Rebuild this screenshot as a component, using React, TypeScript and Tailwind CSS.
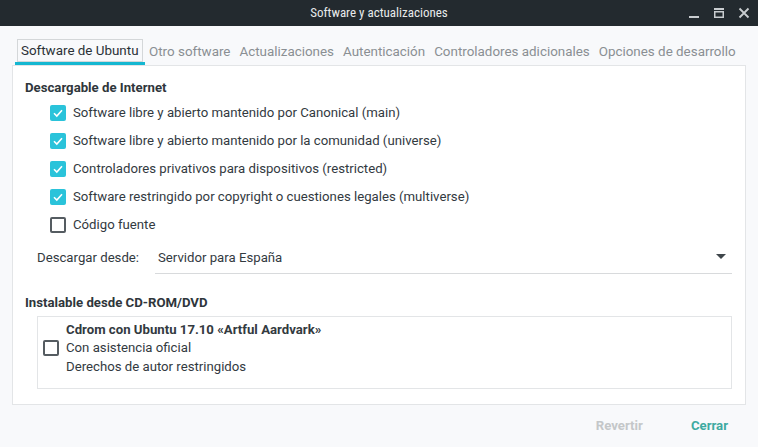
import React from 'react';

const CheckBox: React.FC<{ checked?: boolean }> = ({ checked }) =>
  checked ? (
    <span className="w-4 h-4 rounded-[2px] bg-[#2ac3da] flex items-center justify-center shrink-0">
      <svg width="12" height="12" viewBox="0 0 12 12">
        <path d="M2 6.2 L4.8 9 L10 3.2" stroke="white" strokeWidth="1.6" fill="none" />
      </svg>
    </span>
  ) : (
    <span className="w-4 h-4 rounded-[2px] border-2 border-[#555c61] bg-white shrink-0" />
  );

const tabs = ['Otro software', 'Actualizaciones', 'Autenticación', 'Controladores adicionales', 'Opciones de desarrollo'];

const sources = [
  { label: 'Software libre y abierto mantenido por Canonical (main)', checked: true },
  { label: 'Software libre y abierto mantenido por la comunidad (universe)', checked: true },
  { label: 'Controladores privativos para dispositivos (restricted)', checked: true },
  { label: 'Software restringido por copyright o cuestiones legales (multiverse)', checked: true },
  { label: 'Código fuente', checked: false },
];

export default function App() {
  return (
    <div className="w-[758px] h-[447px] bg-[#f8f9fb] flex flex-col font-['Roboto',sans-serif] text-[13.2px] text-[#333a3f] overflow-hidden">
      {/* Title bar */}
      <div className="h-[26px] bg-[#232a2f] flex items-center relative shrink-0">
        <span className="flex-1 text-center text-[#e8eaeb] text-[13px] font-['Roboto_Condensed','Liberation_Sans_Narrow','Roboto',sans-serif]">
          Software y actualizaciones
        </span>
        <div className="absolute right-[8px] top-0 h-full flex items-center gap-[13px] text-[#c9cdd0]">
          <svg width="12" height="12" viewBox="0 0 12 12"><rect x="1" y="9" width="10" height="2" fill="currentColor" /></svg>
          <svg width="12" height="12" viewBox="0 0 12 12"><rect x="1" y="1" width="10" height="2" fill="currentColor" /><rect x="1.75" y="4.75" width="8.5" height="5.5" stroke="currentColor" strokeWidth="1.5" fill="none" /></svg>
          <svg width="12" height="12" viewBox="0 0 12 12"><path d="M1.5 1.5 L10.5 10.5 M10.5 1.5 L1.5 10.5" stroke="currentColor" strokeWidth="1.8" /></svg>
        </div>
      </div>

      <div className="px-[12px] pt-[13px]">
        {/* Tabs */}
        <div className="flex items-end pl-[3px] text-[13.4px] whitespace-nowrap">
          <div className="border-b-[3px] border-[#15b7d1] px-[2px] shrink-0">
            <div className="border border-[#d4d7d9] bg-[#f8f9fb] h-[23px] px-[3px] pt-[1px] flex items-center text-[#2a3136]">Software de Ubuntu</div>
          </div>
          {tabs.map((t) => (
            <div key={t} className="h-[26px] px-[4.5px] flex items-center pt-[1px] text-[#8a8f93] shrink-0">{t}</div>
          ))}
        </div>

        {/* Panel */}
        <div className="bg-white border border-[#e3e5e7] h-[340px] flex flex-col">
          <div className="pl-[12px] pt-[12px] font-bold text-[#2f363b]">Descargable de Internet</div>
          <div className="flex flex-col pl-[37px] pt-[7px] gap-[12px]">
            {sources.map((s) => (
              <div key={s.label} className="flex items-center gap-[7px] h-[16px]">
                <CheckBox checked={s.checked} />
                <span>{s.label}</span>
              </div>
            ))}
          </div>

          <div className="flex items-start pl-[24px] pr-[13px] mt-[11px]">
            <span className="w-[118px] pt-[4px]">Descargar desde:</span>
            <div className="flex-1 h-[30px] border-b border-[#d8dadc] flex items-start justify-between px-[3px] pt-[4px]">
              <span>Servidor para España</span>
              <svg width="12" height="8" viewBox="0 0 12 8" className="mr-[2px] mt-[5px]"><path d="M1 1 L11 1 L6 6 Z" fill="#3f464b" /></svg>
            </div>
          </div>

          <div className="pl-[12px] mt-[19px] font-bold text-[#2f363b]">Instalable desde CD-ROM/DVD</div>
          <div className="ml-[24px] mr-[13px] mt-[3px] h-[73px] border border-[#e3e5e7] flex items-start">
            <div className="pl-[5px] pt-[23px] pr-[7px]">
              <span className="block w-[16px] h-[16px] rounded-[2px] border-2 border-[#555c61]" />
            </div>
            <div className="flex flex-col pt-[4px] leading-[18.5px]">
              <span className="font-bold">Cdrom con Ubuntu 17.10 «Artful Aardvark»</span>
              <span>Con asistencia oficial</span>
              <span>Derechos de autor restringidos</span>
            </div>
          </div>
        </div>
      </div>

      {/* Buttons */}
      <div className="flex justify-end items-center pr-[30px] pt-[11px] gap-[48px] font-bold">
        <span className="text-[#c4c7c9]">Revertir</span>
        <span className="text-[#3eaaa1]">Cerrar</span>
      </div>
    </div>
  );
}
